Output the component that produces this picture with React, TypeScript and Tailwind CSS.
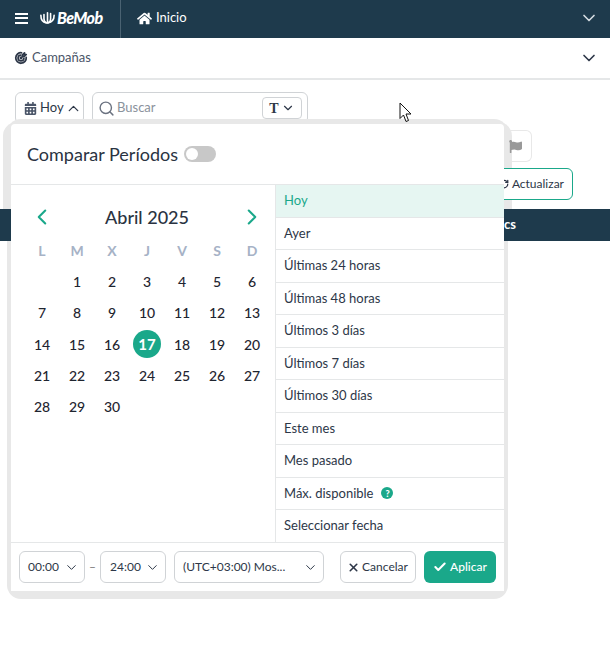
import React from "react";
import { ChevronDown, ChevronUp, ChevronLeft, ChevronRight, Search, Check, X, RefreshCw } from "lucide-react";
import { FaHome, FaCalendarAlt, FaFlag } from "react-icons/fa";
import { TbTargetArrow } from "react-icons/tb";

const weekDays = ["L", "M", "X", "J", "V", "S", "D"];
const presets = ["Ayer", "Últimas 24 horas", "Últimas 48 horas", "Últimos 3 días", "Últimos 7 días", "Últimos 30 días", "Este mes", "Mes pasado"];
const days = [null, ...Array.from({ length: 30 }, (_, i) => i + 1)];

const Logo = () => (
  <div className="flex items-center gap-[2px]">
    <svg width="15" height="14" viewBox="0 0 17 14" fill="none" stroke="white" strokeWidth="1.8" strokeLinecap="round">
      <path d="M1 4c0 5 2 8 6 8.500" />
      <path d="M4.500 3v5c0 2 1 3.500 3 4.500" />
      <path d="M8.500 12.500V1" />
      <path d="M12 2v6c0 2-1 3.500-3 4.500" />
      <path d="M16 4c0 5-3 8-7 8.500" />
    </svg>
    <span className="text-[16px] font-black italic leading-none tracking-[-0.6px] text-white">BeMob</span>
  </div>
);

const MenuBars = () => (
  <div className="ml-[15px] flex h-[11px] w-[13px] flex-col justify-between">
    <div className="h-[2px] bg-white" />
    <div className="h-[2px] bg-white" />
    <div className="h-[2px] bg-white" />
  </div>
);

export default function App() {
  return (
    <div className="relative h-[655px] w-[610px] overflow-hidden bg-white font-['Lato','Liberation_Sans',sans-serif] text-[#2d3748]">
      <header className="flex h-[38px] items-center bg-[#1e3a4c] pb-[2px] text-white">
        <MenuBars />
        <div className="ml-[12px] w-[80px]"><Logo /></div>
        <div className="mb-[-2px] h-[38px] w-px bg-[#4a6272]" />
        <FaHome className="ml-[16px] h-[15px] w-[15px]" />
        <span className="ml-[4px] text-[13px]">Inicio</span>
        <ChevronDown className="ml-auto mr-[11px] h-[20px] w-[20px] text-[#d5dde2]" />
      </header>
      <div className="flex h-[42px] items-center border-b-2 border-[#e5e7e8]">
        <TbTargetArrow className="ml-[14px] h-[14px] w-[14px]" strokeWidth={3} />
        <span className="ml-[4px] text-[13px] text-[#4a5568]">Campañas</span>
        <ChevronDown className="ml-auto mr-[11px] h-[20px] w-[20px]" />
      </div>

      <div className="flex gap-[8px] pl-[15px] pt-[12px]">
        <div className="flex h-[32px] w-[69px] items-center rounded-[6px] border border-[#d0d3d6] pl-[8px] text-[13px]">
          <FaCalendarAlt className="h-[13px] w-[13px] text-[#4a5568]" />
          <span className="ml-[3px]">Hoy</span>
          <ChevronUp className="ml-[1px] h-[17px] w-[17px]" strokeWidth={1.8} />
        </div>
        <div className="flex h-[32px] w-[216px] items-center rounded-[6px] border border-[#d0d3d6] pl-[5px] pr-[5px]">
          <Search className="h-[17px] w-[17px] text-[#6b7280]" />
          <span className="ml-[2px] text-[13px] text-[#8a929c]">Buscar</span>
          <div className="ml-auto flex h-[22px] w-[40px] items-center justify-center gap-[2px] rounded-[4px] border border-[#d0d3d6] font-['Liberation_Serif',serif] text-[14px] font-bold">
            T<ChevronDown className="h-[14px] w-[14px]" />
          </div>
        </div>
      </div>

      {/* sombra del popup */}
      <div className="absolute left-[7px] top-[119px] h-[480px] w-[501px] rounded-[14px] bg-[#e8e8e8]" />
      <div className="absolute left-[3px] top-[122px] h-[87px] w-[509px] rounded-t-[14px] bg-[#e8e8e8]" />

      {/* contenido detras del popup */}
      <div className="absolute left-[504px] top-[130px] flex h-[32px] w-[28px] items-center rounded-r-[6px] border border-l-0 border-[#e8e8e8] pl-[5px]">
        <FaFlag className="h-[13px] w-[13px] text-[#999]" />
      </div>
      <div className="absolute left-[490px] top-[168px] flex h-[32px] w-[83px] items-center justify-end gap-[3px] rounded-[6px] border border-[#1aa88a] bg-white pr-[8px] text-[12px]">
        <RefreshCw className="h-[10px] w-[10px]" strokeWidth={3} />
        Actualizar
      </div>
      <div className="absolute left-0 top-[209px] flex h-[32px] w-[610px] items-center bg-[#1e3a4c] pl-[504px] text-[13px] font-bold text-white">cs</div>

      {/* popup de fechas */}
      <div className="absolute left-[11px] top-[124px] flex h-[467px] w-[493px] flex-col rounded-t-[4px] bg-white">
        <div className="flex h-[61px] items-center border-b border-[#e5e7e8] pl-[16px]">
          <span className="text-[18px] text-[#2a3342]">Comparar Períodos</span>
          <div className="ml-[6px] h-[16px] w-[32px] rounded-full bg-[#c8c8c8] p-[2px]">
            <div className="h-[12px] w-[12px] rounded-full bg-white" />
          </div>
        </div>
        <div className="flex h-[357px]">
          <div className="w-[265px] border-r border-[#e5e7e8] pl-[13.500px]">
            <div className="flex h-[53px] w-[245.500px] items-center justify-between pl-[4.500px] pr-[5px] pt-[11px]">
              <ChevronLeft className="h-[26px] w-[26px] text-[#1aa88a]" strokeWidth={1.9} />
              <span className="text-[18px] font-medium text-[#2a3342]">Abril 2025</span>
              <ChevronRight className="h-[26px] w-[26px] text-[#1aa88a]" strokeWidth={1.9} />
            </div>
            <div className="grid w-[245px] grid-cols-7">
              {weekDays.map((d) => (
                <div key={d} className="flex h-[24px] items-center justify-center text-[14px] font-bold text-[#a6b2c6]">{d}</div>
              ))}
              {days.map((d, i) => (
                <div key={i} className="flex h-[31.250px] items-center justify-center pt-[8px] text-[14px] font-medium text-[#1f2530]">
                  {d === 17 ? (
                    <span className="flex h-[28px] w-[28px] items-center justify-center rounded-full bg-[#1aa88a] text-[15px] font-bold text-white">17</span>
                  ) : d}
                </div>
              ))}
            </div>
          </div>
          <div className="flex-1 text-[13px] text-[#2d3748]">
            <div className="flex h-[32.500px] items-center border-b border-[#e5e7e8] bg-[#e6f6f2] pl-[8px] text-[#1aa88a]">Hoy</div>
            {presets.map((p) => (
              <div key={p} className="flex h-[32.500px] items-center border-b border-[#e5e7e8] pl-[8px]">{p}</div>
            ))}
            <div className="flex h-[32.500px] items-center gap-[8px] border-b border-[#e5e7e8] pl-[8px]">
              Máx. disponible
              <span className="flex h-[12px] w-[12px] items-center justify-center rounded-full bg-[#1aa88a] text-[9px] font-black text-white">?</span>
            </div>
            <div className="flex h-[32px] items-center pl-[8px]">Seleccionar fecha</div>
          </div>
        </div>
        <div className="flex h-[49px] items-center border-t border-[#e5e7e8] pl-[8px] text-[12px]">
          <div className="flex h-[32px] w-[66px] items-center justify-between rounded-[6px] border border-[#d0d3d6] pl-[8px] pr-[5px]">
            00:00<ChevronDown className="h-[15px] w-[15px]" strokeWidth={1.6} />
          </div>
          <span className="w-[15px] text-center text-[#777]">–</span>
          <div className="flex h-[32px] w-[66px] items-center justify-between rounded-[6px] border border-[#d0d3d6] pl-[9px] pr-[5px]">
            24:00<ChevronDown className="h-[15px] w-[15px]" strokeWidth={1.6} />
          </div>
          <div className="ml-[8px] flex h-[32px] w-[150px] items-center justify-between rounded-[6px] border border-[#d0d3d6] pl-[8px] pr-[5px]">
            (UTC+03:00) Mos...<ChevronDown className="h-[15px] w-[15px]" strokeWidth={1.6} />
          </div>
          <div className="ml-[16px] flex h-[32px] w-[76px] items-center justify-center gap-[2px] rounded-[6px] border border-[#d0d3d6] pr-[1px]">
            <X className="h-[13px] w-[13px]" strokeWidth={3} />Cancelar
          </div>
          <div className="ml-[8px] flex h-[32px] w-[72px] items-center justify-center gap-[3px] rounded-[6px] bg-[#1aa88a] font-medium text-white">
            <Check className="h-[14px] w-[14px]" strokeWidth={3.5} />Aplicar
          </div>
        </div>
      </div>

      {/* cursor */}
      <svg className="absolute left-[399px] top-[102px]" width="14" height="21" viewBox="0 0 14 21">
        <path d="M1 1v15.500l3.500-3.500 2.500 6.500 2.500-1-2.500-6.500h5z" fill="white" stroke="#111" strokeWidth="1" />
      </svg>
    </div>
  );
}
